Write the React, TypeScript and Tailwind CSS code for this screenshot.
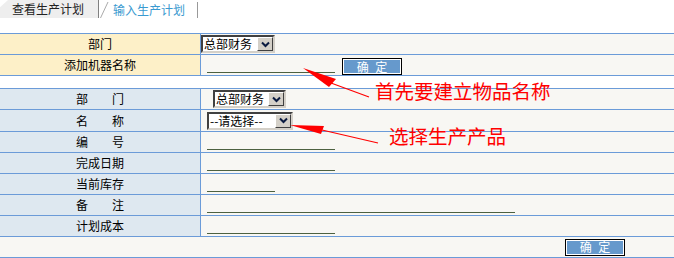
import type { ReactNode } from 'react'

const line = 'border-[#6b9bd8]'

function Chevron() {
  return (
    <svg width="9" height="7" viewBox="0 0 9 7">
      <path d="M1 1.5 L4.5 5 L8 1.5" fill="none" stroke="#0a1a40" strokeWidth="2" />
    </svg>
  )
}

function Select({ text, w }: { text: string; w: string }) {
  return (
    <div
      className={`flex h-[18px] ${w} border-2 border-t-[#404040] border-l-[#404040] border-b-[#d4d0c8] border-r-[#d4d0c8] bg-white`}
    >
      <span className="flex-1 whitespace-nowrap pl-[1px] text-[12px] leading-[14px] text-black">{text}</span>
      <span className="flex w-[16px] shrink-0 items-center justify-center border border-t-white border-l-white border-b-[#404040] border-r-[#404040] bg-[#d4d0c8]">
        <Chevron />
      </span>
    </div>
  )
}

function Field({ w }: { w: string }) {
  return <div className={`${w} ml-[6px] h-[1px] self-end mb-[2px] border-b border-[#4d6140]`} />
}

function Btn() {
  return (
    <button className="h-[17px] w-[60px] border border-black bg-[#6699cc] pl-[2px] text-[12px] leading-none tracking-[2px] text-white shadow-[inset_0_0_0_1px_white]">
      确 定
    </button>
  )
}

function Row({ label, bg, h = 'h-[21px]', children }: { label: string; bg: string; h?: string; children?: ReactNode }) {
  return (
    <div className={`flex ${h} border-b ${line}`}>
      <div className={`flex w-[201px] shrink-0 items-center justify-center border-r ${line} ${bg} whitespace-pre text-[12px] text-black`}>
        {label}
      </div>
      <div className="flex flex-1 items-center bg-[#f8f7f3]">{children}</div>
    </div>
  )
}

export default function App() {
  const yellow = 'bg-[#fdf0c8]'
  const blue = 'bg-[#dee8f0]'
  return (
    <div className="relative h-[258px] w-[674px] overflow-hidden bg-white font-['Noto_Sans_CJK_SC',sans-serif]">
      {/* tabs */}
      <div className="flex h-[18px] items-end">
        <div className="flex h-[18px] w-[99px] items-center border-r border-[#808080] bg-[#eeeeee] pl-[12px] text-[12px] text-[#222] [clip-path:polygon(0_100%,0_40%,8px_0,100%_0,100%_100%)]">
          查看生产计划
        </div>
        <svg width="9" height="18" viewBox="0 0 9 18" className="ml-[1px]">
          <path d="M0.5 18 L8 2" stroke="#aaaaaa" strokeWidth="1" fill="none" />
        </svg>
        <div className="flex h-[16px] w-[89px] items-center border-r border-[#999] pl-[4px] text-[12px] text-[#3a9ad0]">
          输入生产计划
        </div>
      </div>

      {/* first block */}
      <div className={`mt-[15px] border-t ${line}`}>
        <Row label="部门" bg={yellow} h="h-[21px]">
          <Select text="总部财务" w="w-[74px]" />
        </Row>
        <Row label="添加机器名称" bg={yellow} h="h-[21px]">
          <Field w="w-[128px]" />
          <div className="ml-[7px] mb-[1px]">
            <Btn />
          </div>
        </Row>
      </div>

      {/* second block */}
      <div className={`mt-[12px] border-t ${line}`}>
        <Row label={'部　　门'} bg={blue}>
          <div className="ml-[12px]">
            <Select text="总部财务" w="w-[73px]" />
          </div>
        </Row>
        <Row label={'名　　称'} bg={blue} h="h-[22px]">
          <div className="ml-[6px]">
            <Select text="--请选择--" w="w-[86px]" />
          </div>
        </Row>
        <Row label={'编　　号'} bg={blue}>
          <Field w="w-[128px]" />
        </Row>
        <Row label="完成日期" bg={blue}>
          <Field w="w-[128px]" />
        </Row>
        <Row label="当前库存" bg={blue}>
          <Field w="w-[68px]" />
        </Row>
        <Row label={'备　　注'} bg={blue}>
          <Field w="w-[308px]" />
        </Row>
        <Row label="计划成本" bg={blue}>
          <Field w="w-[128px]" />
        </Row>
        <div className={`flex h-[21px] items-center justify-end border-b ${line} bg-[#f8f7f3] pr-[49px]`}>
          <Btn />
        </div>
      </div>

      {/* annotations */}
      <svg className="pointer-events-none absolute left-0 top-0" width="674" height="258" viewBox="0 0 674 258">
        <polygon points="303,68 336,79 329,87" fill="#ff0000" />
        <line x1="331" y1="83" x2="369" y2="97" stroke="#ff0000" strokeWidth="1.2" />
        <polygon points="290,125 324,126 321,134" fill="#ff0000" />
        <line x1="322" y1="130" x2="378" y2="143" stroke="#ff0000" strokeWidth="1.2" />
      </svg>
      <div className="pointer-events-none absolute left-[375px] top-[79px] whitespace-nowrap text-[19.5px] leading-[24px] text-[#ff0000]">
        首先要建立物品名称
      </div>
      <div className="pointer-events-none absolute left-[389px] top-[124px] whitespace-nowrap text-[19.5px] leading-[24px] text-[#ff0000]">
        选择生产产品
      </div>
    </div>
  )
}
